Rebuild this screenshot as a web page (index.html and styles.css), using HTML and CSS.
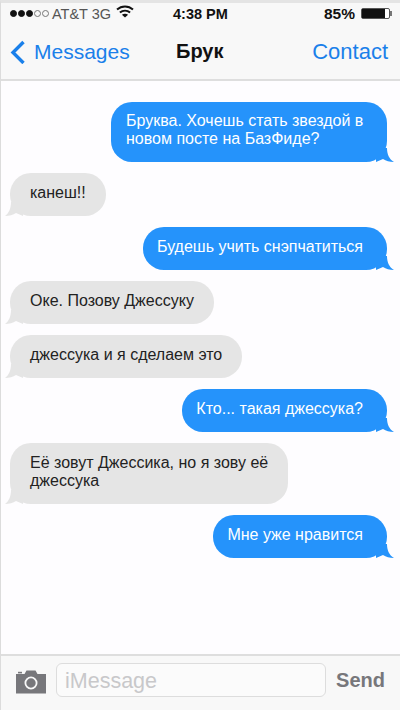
FILE: index.html
```html
<!DOCTYPE html>
<html lang="ru">
<head>
    <meta charset="UTF-8">
    <meta name="viewport" content="width=device-width, initial-scale=1.0">
    <title>Брук</title>
    <link rel="stylesheet" href="styles.css">
</head>
<body>
    <div class="phone">
        <div class="top-bar">
            <div class="status-bar">
                <div class="status-left">
                    <span class="signal">
                        <i class="dot"></i><i class="dot"></i><i class="dot"></i><i class="dot empty"></i><i class="dot empty"></i>
                    </span>
                    <span class="carrier">AT&amp;T 3G</span>
                    <svg class="wifi" width="18" height="13" viewBox="0 0 18 13">
                        <path d="M1 4.6C5.6 0.4 12.4 0.4 17 4.6" fill="none" stroke="#111" stroke-width="2"/>
                        <path d="M3.9 7.6C6.9 5 11.1 5 14.1 7.6" fill="none" stroke="#111" stroke-width="2"/>
                        <path d="M9 12.6L5.9 9.8C7.7 8.3 10.3 8.3 12.1 9.8Z" fill="#111"/>
                    </svg>
                </div>
                <div class="status-time">4:38 PM</div>
                <div class="status-right">
                    <span class="battery-text">85%</span>
                    <span class="battery"><span class="battery-level"></span></span>
                    <span class="battery-tip"></span>
                </div>
            </div>
            <div class="nav-bar">
                <div class="nav-back">
                    <svg width="16" height="24" viewBox="0 0 16 24">
                        <path d="M13.5 2L3 12.5L13.5 23" fill="none" stroke="#1a80ea" stroke-width="3.4"/>
                    </svg>
                    <span>Messages</span>
                </div>
                <div class="nav-title">Брук</div>
                <div class="nav-action">Contact</div>
            </div>
        </div>

        <div class="messages">
            <div class="bubble out two-lines">Бруква. Хочешь стать звездой в новом посте на БазФиде?</div>
            <div class="bubble in">канеш!!</div>
            <div class="bubble out">Будешь учить снэпчатиться</div>
            <div class="bubble in">Оке. Позову Джессуку</div>
            <div class="bubble in">джессука и я сделаем это</div>
            <div class="bubble out">Кто... такая джессука?</div>
            <div class="bubble in wide">Её зовут Джессика, но я зову её джессука</div>
            <div class="bubble out">Мне уже нравится</div>
        </div>

        <div class="input-bar">
            <svg class="camera" width="32" height="25" viewBox="0 0 32 25">
                <path fill-rule="evenodd" fill="#77777b" d="M1 5H9.5L11.5 1.500H20.500L22.500 5H31V24.500H1ZM16 7.500A6.500 6.500 0 1 0 16 20.500A6.500 6.500 0 1 0 16 7.500ZM16 9.300A4.700 4.700 0 1 1 16 18.700A4.700 4.700 0 1 1 16 9.300Z"/>
                <rect x="3" y="2.800" width="4" height="1.600" fill="#77777b"/>
            </svg>
            <div class="input-box">iMessage</div>
            <div class="send">Send</div>
        </div>
    </div>
</body>
</html>
```

FILE: styles.css
```css
body {
    margin: 0;
    background-color: #fff;
    font-family: "Liberation Sans", Arial, sans-serif;
}

.phone {
    width: 400px;
    height: 710px;
    display: flex;
    flex-direction: column;
    box-sizing: border-box;
    border-left: 1px solid #dcdcdc;
    border-top: 3px solid #e4e4e4;
    overflow: hidden;
}

/* Верхняя панель */
.top-bar {
    background-color: #f8f8f8;
    border-bottom: 2px solid #dedede;
    height: 76px;
    flex-shrink: 0;
}

.status-bar {
    height: 21px;
    display: flex;
    align-items: center;
    justify-content: space-between;
    padding: 0 8px 0 9px;
    font-size: 14.5px;
    color: #111;
    position: relative;
}

.status-left,
.status-right {
    display: flex;
    align-items: center;
}

.signal {
    display: flex;
    gap: 1px;
    margin-right: 3px;
}

.dot {
    width: 5px;
    height: 5px;
    border-radius: 50%;
    background-color: #111;
    border: 1px solid #111;
}

.dot.empty {
    background-color: transparent;
    border-color: #777;
}

.carrier {
    color: #555;
}

.wifi {
    margin-left: 5px;
    margin-top: -4px;
}

.status-time {
    position: absolute;
    left: 172px;
    font-weight: bold;
}

.battery-text {
    font-weight: bold;
    font-size: 15.5px;
    margin-right: 6px;
}

.battery {
    width: 27px;
    height: 9px;
    border: 1px solid #555;
    display: block;
    border-radius: 2px;
    background-color: #fff;
}

.battery-level {
    display: block;
    width: 23px;
    height: 9px;
    background-color: #111;
}

.battery-tip {
    width: 2px;
    height: 5px;
    background-color: #777;
}

.nav-bar {
    height: 55px;
    display: flex;
    align-items: center;
    justify-content: space-between;
    padding: 0 12px 0 9px;
    font-size: 21px;
    color: #1a80ea;
    position: relative;
}

.nav-back {
    display: flex;
    align-items: center;
    gap: 8px;
}

.nav-action {
    font-size: 22px;
}

.nav-title {
    position: absolute;
    left: 175px;
    font-weight: bold;
    font-size: 20px;
    color: #111;
}

/* Сообщения */
.messages {
    flex: 1;
    background-color: #fefdff;
    display: flex;
    flex-direction: column;
    gap: 11px;
    padding: 21px 13px 0 9px;
    font-size: 16px;
    line-height: 18px;
}

.bubble {
    position: relative;
    max-width: 276px;
    box-sizing: border-box;
    border-radius: 21px;
}

.bubble.out {
    align-self: flex-end;
    background-color: #2593fb;
    color: #fff;
    padding: 11px 24px 14px 14.5px;
}

.bubble.in {
    align-self: flex-start;
    background-color: #e5e5e5;
    color: #222;
    padding: 11px 20px 14px 20px;
}

.bubble.out.two-lines {
    padding: 10px 20px 14px 15px;
}

.bubble.in.wide {
    width: 278px;
    max-width: none;
    padding-right: 14px;
}

.bubble::after {
    content: "";
    position: absolute;
    bottom: 0;
    width: 18px;
    height: 14px;
}

.bubble.out::after {
    right: -7px;
    background-color: #2593fb;
    clip-path: path("M11 0C11 6 13 11 18 14C13.500 14 10 13 7 11L0 14L0 0Z");
}

.bubble.in::after {
    left: -5px;
    background-color: #e5e5e5;
    clip-path: path("M6 0C6 6 4 11 0 14C4.500 14 8 13 11 11L18 14L18 0Z");
}

/* Поле ввода */
.input-bar {
    height: 56px;
    flex-shrink: 0;
    background-color: #f8f8f8;
    border-top: 2px solid #dedede;
    display: flex;
    align-items: center;
    padding: 0 15px 6px 14px;
    box-sizing: border-box;
}

.camera {
    flex-shrink: 0;
    margin-right: 9px;
    margin-top: 2px;
}

.input-box {
    width: 271px;
    height: 34px;
    box-sizing: border-box;
    border: 1px solid #dddddd;
    border-radius: 6px;
    background-color: #fbfbfb;
    color: #c8c8ca;
    font-size: 21.5px;
    line-height: 34px;
    padding-left: 8px;
}

.send {
    margin-left: 10px;
    color: #77777b;
    font-size: 20px;
    font-weight: bold;
}
```
